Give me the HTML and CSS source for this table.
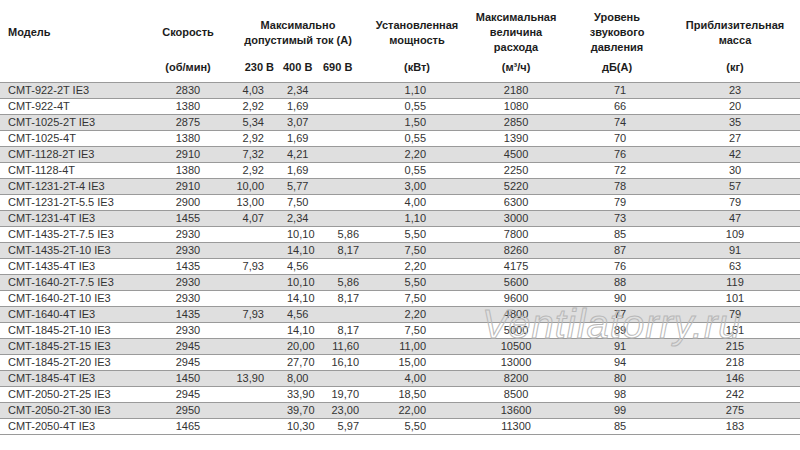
FILE: index.html
```html
<!DOCTYPE html>
<html lang="ru">
<head>
<meta charset="utf-8">
<title>CMT</title>
<link rel="stylesheet" href="styles.css">
</head>
<body>
<div class="page">
<table class="spec">
<colgroup>
<col class="w-model"><col class="w-speed"><col class="w-a230"><col class="w-a400"><col class="w-a690"><col class="w-power"><col class="w-flow"><col class="w-sound"><col class="w-mass">
</colgroup>
<thead>
<tr class="h1">
<th class="model">Модель</th>
<th>Скорость</th>
<th colspan="3" class="amp">Максимально<br>допустимый ток (А)</th>
<th>Установленная<br>мощность</th>
<th>Максимальная<br>величина<br>расхода</th>
<th>Уровень<br>звукового<br>давления</th>
<th>Приблизительная<br>масса</th>
</tr>
<tr class="h2">
<th></th>
<th>(об/мин)</th>
<th class="u230">230 В</th>
<th class="u400">400 В</th>
<th class="u690">690 В</th>
<th>(кВт)</th>
<th>(м³/ч)</th>
<th>дБ(А)</th>
<th>(кг)</th>
</tr>
</thead>
<tbody>
<tr><td class="model">CMT-922-2T IE3</td><td>2830</td><td class="a230">4,03</td><td class="a400">2,34</td><td class="a690"></td><td class="pw">1,10</td><td>2180</td><td class="snd">71</td><td>23</td></tr>
<tr><td class="model">CMT-922-4T</td><td>1380</td><td class="a230">2,92</td><td class="a400">1,69</td><td class="a690"></td><td class="pw">0,55</td><td>1080</td><td class="snd">66</td><td>20</td></tr>
<tr><td class="model">CMT-1025-2T IE3</td><td>2875</td><td class="a230">5,34</td><td class="a400">3,07</td><td class="a690"></td><td class="pw">1,50</td><td>2850</td><td class="snd">74</td><td>35</td></tr>
<tr><td class="model">CMT-1025-4T</td><td>1380</td><td class="a230">2,92</td><td class="a400">1,69</td><td class="a690"></td><td class="pw">0,55</td><td>1390</td><td class="snd">70</td><td>27</td></tr>
<tr><td class="model">CMT-1128-2T IE3</td><td>2910</td><td class="a230">7,32</td><td class="a400">4,21</td><td class="a690"></td><td class="pw">2,20</td><td>4500</td><td class="snd">76</td><td>42</td></tr>
<tr><td class="model">CMT-1128-4T</td><td>1380</td><td class="a230">2,92</td><td class="a400">1,69</td><td class="a690"></td><td class="pw">0,55</td><td>2250</td><td class="snd">72</td><td>30</td></tr>
<tr><td class="model">CMT-1231-2T-4 IE3</td><td>2910</td><td class="a230">10,00</td><td class="a400">5,77</td><td class="a690"></td><td class="pw">3,00</td><td>5220</td><td class="snd">78</td><td>57</td></tr>
<tr><td class="model">CMT-1231-2T-5.5 IE3</td><td>2900</td><td class="a230">13,00</td><td class="a400">7,50</td><td class="a690"></td><td class="pw">4,00</td><td>6300</td><td class="snd">79</td><td>79</td></tr>
<tr><td class="model">CMT-1231-4T IE3</td><td>1455</td><td class="a230">4,07</td><td class="a400">2,34</td><td class="a690"></td><td class="pw">1,10</td><td>3000</td><td class="snd">73</td><td>47</td></tr>
<tr><td class="model">CMT-1435-2T-7.5 IE3</td><td>2930</td><td class="a230"></td><td class="a400">10,10</td><td class="a690">5,86</td><td class="pw">5,50</td><td>7800</td><td class="snd">85</td><td>109</td></tr>
<tr><td class="model">CMT-1435-2T-10 IE3</td><td>2930</td><td class="a230"></td><td class="a400">14,10</td><td class="a690">8,17</td><td class="pw">7,50</td><td>8260</td><td class="snd">87</td><td>91</td></tr>
<tr><td class="model">CMT-1435-4T IE3</td><td>1435</td><td class="a230">7,93</td><td class="a400">4,56</td><td class="a690"></td><td class="pw">2,20</td><td>4175</td><td class="snd">76</td><td>63</td></tr>
<tr><td class="model">CMT-1640-2T-7.5 IE3</td><td>2930</td><td class="a230"></td><td class="a400">10,10</td><td class="a690">5,86</td><td class="pw">5,50</td><td>5600</td><td class="snd">88</td><td>119</td></tr>
<tr><td class="model">CMT-1640-2T-10 IE3</td><td>2930</td><td class="a230"></td><td class="a400">14,10</td><td class="a690">8,17</td><td class="pw">7,50</td><td>9600</td><td class="snd">90</td><td>101</td></tr>
<tr><td class="model">CMT-1640-4T IE3</td><td>1435</td><td class="a230">7,93</td><td class="a400">4,56</td><td class="a690"></td><td class="pw">2,20</td><td>4800</td><td class="snd">77</td><td>79</td></tr>
<tr><td class="model">CMT-1845-2T-10 IE3</td><td>2930</td><td class="a230"></td><td class="a400">14,10</td><td class="a690">8,17</td><td class="pw">7,50</td><td>5000</td><td class="snd">89</td><td>151</td></tr>
<tr><td class="model">CMT-1845-2T-15 IE3</td><td>2945</td><td class="a230"></td><td class="a400">20,00</td><td class="a690">11,60</td><td class="pw">11,00</td><td>10500</td><td class="snd">91</td><td>215</td></tr>
<tr><td class="model">CMT-1845-2T-20 IE3</td><td>2945</td><td class="a230"></td><td class="a400">27,70</td><td class="a690">16,10</td><td class="pw">15,00</td><td>13000</td><td class="snd">94</td><td>218</td></tr>
<tr><td class="model">CMT-1845-4T IE3</td><td>1450</td><td class="a230">13,90</td><td class="a400">8,00</td><td class="a690"></td><td class="pw">4,00</td><td>8200</td><td class="snd">80</td><td>146</td></tr>
<tr><td class="model">CMT-2050-2T-25 IE3</td><td>2945</td><td class="a230"></td><td class="a400">33,90</td><td class="a690">19,70</td><td class="pw">18,50</td><td>8500</td><td class="snd">98</td><td>242</td></tr>
<tr><td class="model">CMT-2050-2T-30 IE3</td><td>2950</td><td class="a230"></td><td class="a400">39,70</td><td class="a690">23,00</td><td class="pw">22,00</td><td>13600</td><td class="snd">99</td><td>275</td></tr>
<tr><td class="model">CMT-2050-4T IE3</td><td>1465</td><td class="a230"></td><td class="a400">10,30</td><td class="a690">5,97</td><td class="pw">5,50</td><td>11300</td><td class="snd">85</td><td>183</td></tr>
</tbody>
</table>
<div class="watermark">Ventilatorry.ru</div>
</div>
</body>
</html>
```

FILE: styles.css
```css
html, body {
  margin: 0;
  padding: 0;
  background: #ffffff;
}

.page {
  position: relative;
  width: 800px;
  height: 450px;
  overflow: hidden;
  font-family: "Liberation Sans", Arial, sans-serif;
}

.spec {
  width: 800px;
  border-collapse: collapse;
  table-layout: fixed;
  font-size: 11px;
}

.w-model { width: 158px; }
.w-speed { width: 60px; }
.w-a230 { width: 58px; }
.w-a400 { width: 42px; }
.w-a690 { width: 48px; }
.w-power { width: 102px; }
.w-flow { width: 96px; }
.w-sound { width: 106px; }
.w-mass { width: 130px; }

.spec th {
  font-weight: bold;
  color: #1c1c1c;
  line-height: 15px;
  padding: 0;
  text-align: center;
  vertical-align: middle;
  white-space: nowrap;
}

.h1 th {
  height: 45px;
  padding-top: 10px;
}

.h2 th {
  height: 20px;
  padding-top: 2px;
  padding-bottom: 5px;
}

.spec th.model,
.spec td.model {
  text-align: left;
  padding-left: 8px;
}

.spec th.amp {
  padding-left: 12px;
}

.spec th.u230 { text-align: right; padding-right: 2px; }
.spec th.u400 { text-align: left; padding-left: 7px; }
.spec th.u690 { text-align: left; padding-left: 5px; }

.spec tbody tr {
  height: 16px;
  border-bottom: 1px solid #9a9a9a;
}

.spec tbody tr:first-child {
  border-top: 1px solid #9a9a9a;
}

.spec tbody tr:nth-child(odd) {
  background: #dfdfdf;
}

.spec td {
  color: #333333;
  padding: 0;
  height: 15px;
  line-height: 15px;
  text-align: center;
  white-space: nowrap;
  vertical-align: middle;
}

.spec td.a230 { text-align: right; padding-right: 12px; }
.spec td.a400 { text-align: left; padding-left: 11px; }
.spec td.a690 { text-align: right; padding-right: 7px; }
.spec td.pw { text-align: right; padding-right: 42px; }
.spec td.snd { padding-left: 6px; }

.watermark {
  position: absolute;
  left: 482px;
  top: 304px;
  font-family: "Liberation Sans", Arial, sans-serif;
  font-style: italic;
  font-size: 40px;
  line-height: 40px;
  letter-spacing: 1px;
  color: transparent;
  -webkit-text-stroke: 1px #b8b8b8;
  white-space: nowrap;
  pointer-events: none;
}
```
